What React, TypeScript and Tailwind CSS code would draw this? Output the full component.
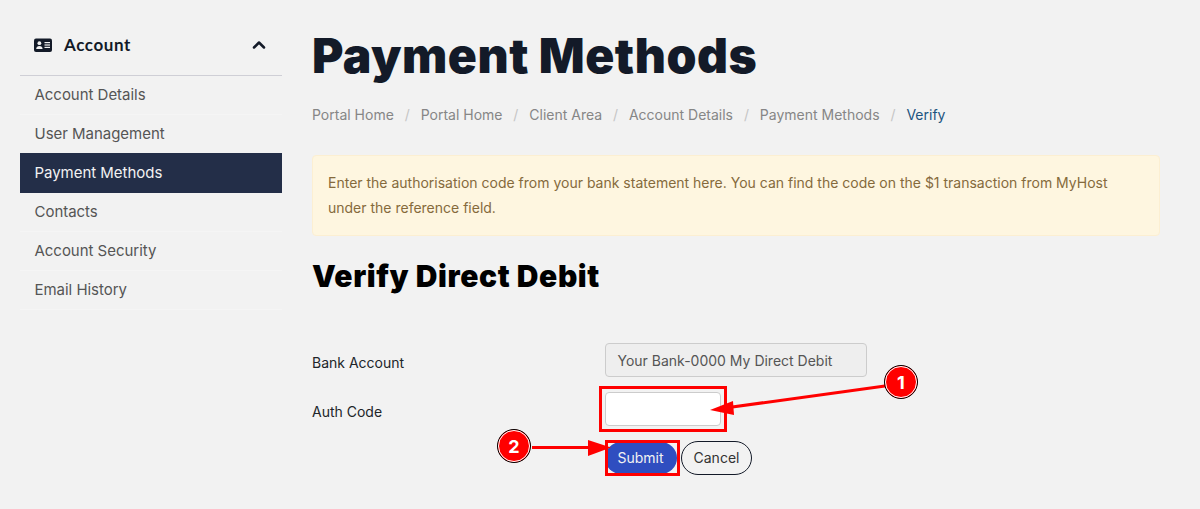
import { ChevronUp } from 'lucide-react';

const sideLinks = ['Account Details', 'User Management', 'Payment Methods', 'Contacts', 'Account Security', 'Email History'];
const crumbs = ['Portal Home', 'Portal Home', 'Client Area', 'Account Details', 'Payment Methods'];

function IdCard() {
  return (
    <svg width="18" height="14" viewBox="0 0 18 14" className="shrink-0">
      <rect x="0" y="0.5" width="18" height="13.5" rx="2" fill="#131a28" />
      <circle cx="5.4" cy="5.2" r="1.9" fill="#f2f2f2" />
      <path d="M2.2 11c0-2 1.4-3 3.2-3s3.2 1 3.2 3z" fill="#f2f2f2" />
      <rect x="10.5" y="4" width="5.5" height="1.2" fill="#f2f2f2" />
      <rect x="10.5" y="6.4" width="5.5" height="1.2" fill="#f2f2f2" />
      <rect x="10.5" y="8.8" width="5.5" height="1.2" fill="#f2f2f2" />
    </svg>
  );
}

function Badge({ n }: { n: string }) {
  return (
    <div className="absolute w-[34px] h-[34px] rounded-full bg-[#ff0000] border border-black outline outline-1 outline-white -outline-offset-2 flex items-center justify-center text-white text-[18px] font-bold font-['Inter',sans-serif]">
      {n}
    </div>
  );
}

export default function App() {
  return (
    <div className="relative w-[1200px] h-[509px] overflow-hidden bg-[#f2f2f2] font-['Inter',sans-serif] flex">
      <aside className="w-[262px] ml-5 mt-[15px] shrink-0">
        <div className="h-[61px] border-b border-[#cfcfd6] flex items-center pl-[14px] pr-[13px]">
          <IdCard />
          <span className="ml-[12px] text-[17px] font-bold tracking-[0.6px] text-[#131a28] font-['Lato',sans-serif]">Account</span>
          <ChevronUp className="ml-auto text-[#131a28]" size={20} strokeWidth={3} />
        </div>
        {sideLinks.map((l) => (
          <div
            key={l}
            className={
              'pl-[14.5px] flex items-center text-[15px] tracking-[-0.03px] border-b ' +
              (l === 'Payment Methods'
                ? 'bg-[#232e48] text-[#f2f2f2] border-[#232e48] -mt-px h-[40px] pt-[2px]'
                : 'h-[39px] text-[#555555] border-[#f5f5f5]')
            }
          >
            {l}
          </div>
        ))}
      </aside>

      <main className="ml-[30px] w-[848px] pt-[26px]">
        <h1 className="text-[48px] leading-[60px] font-black tracking-[0.5px] text-[#131a28]">Payment Methods</h1>
        <nav className="mt-[18px] flex items-center text-[14px] leading-[21px] text-[#868686]">
          {crumbs.map((c, i) => (
            <span key={i} className="flex items-center">
              {c}
              <span className="mx-[10.9px] text-[#c5c5c5]">/</span>
            </span>
          ))}
          <span className="text-[#1c5480]">Verify</span>
        </nav>
        <div className="mt-[30px] h-[81px] rounded border border-[#fcefd2] bg-[#fef6e0] px-[15px] pt-[14px] text-[14px] leading-[25px] text-[#856a3c]">
          Enter the authorisation code from your bank statement here. You can find the code on the $1 transaction from MyHost under the reference field.
        </div>
        <h2 className="mt-[20px] text-[30px] leading-[40px] font-black tracking-[0.6px] text-black">Verify Direct Debit</h2>

        <div className="mt-[47px] flex items-center h-[34px]">
          <label className="w-[293px] pt-[4px] text-[14px] text-[#212529]">Bank Account</label>
          <div className="w-[262px] h-[34px] rounded border border-[#cccccc] bg-[#eeeeee] pl-[11.5px] pr-3 flex items-center text-[14px] text-[#555555]">
            Your Bank-0000 My Direct Debit
          </div>
        </div>
        <div className="mt-[15px] flex items-center h-[34px]">
          <label className="w-[293px] pt-[4px] text-[14px] text-[#212529]">Auth Code</label>
          <input className="w-[116px] h-[34px] rounded border border-[#cccccc] bg-white" />
        </div>
        <div className="mt-[15px] ml-[293px] flex items-center gap-[4px]">
          <button className="h-[32px] w-[72px] pb-[1px] pr-[1px] rounded-full bg-[#2f4ec0] text-[14px] text-[#f2f2f2]">Submit</button>
          <button className="h-[34px] w-[71px] pb-[2px] rounded-full border border-[#131a28] text-[14px] text-[#333333]">Cancel</button>
        </div>
      </main>

      {/* annotations */}
      <div className="absolute left-[599px] top-[386px] w-[128px] h-[46px] border-[3px] border-[#ff0000]" />
      <div className="absolute left-[605px] top-[440px] w-[75px] h-[36px] border-[3px] border-[#ff0000]" />
      <svg className="absolute left-0 top-0" width="1200" height="509">
        <line x1="885" y1="386" x2="725" y2="408" stroke="#ff0000" strokeWidth="3" />
        <polygon points="710,410 733,401 734,415" fill="#ff0000" />
        <line x1="532" y1="447.5" x2="590" y2="447.5" stroke="#ff0000" strokeWidth="3" />
        <polygon points="611,447.5 588,440 588,456" fill="#ff0000" />
      </svg>
      <div className="absolute left-[884px] top-[365px]"><Badge n="1" /></div>
      <div className="absolute left-[497px] top-[429px]"><Badge n="2" /></div>
    </div>
  );
}
